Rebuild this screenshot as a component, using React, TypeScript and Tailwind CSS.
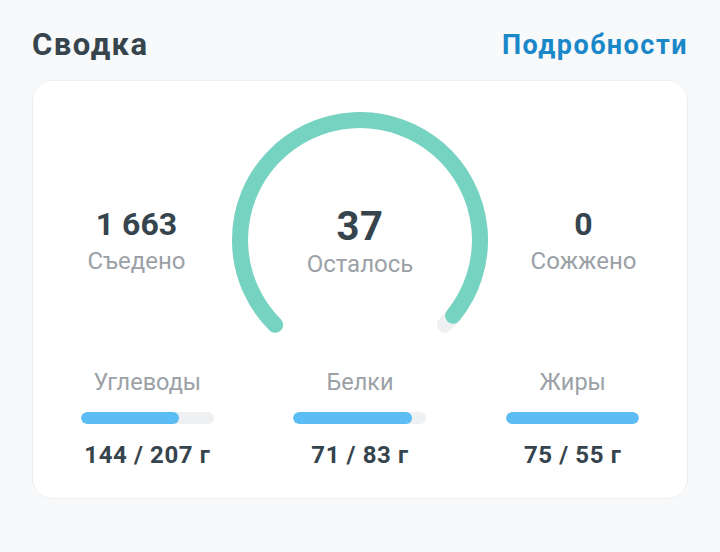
const eaten = 1663
const burned = 0
const remaining = 37
const goal = eaten - burned + remaining

const macros = [
    { name: 'Углеводы', value: 144, goal: 207, fill: 74 },
    { name: 'Белки', value: 71, goal: 83, fill: 89 },
    { name: 'Жиры', value: 75, goal: 55, fill: 100 },
]

function point(deg: number, r: number, c: number) {
    const a = (deg * Math.PI) / 180
    return [c + r * Math.cos(a), c + r * Math.sin(a)]
}

function arc(from: number, to: number, r: number, c: number) {
    const [x1, y1] = point(from, r, c)
    const [x2, y2] = point(to, r, c)
    const large = to - from > 180 ? 1 : 0
    return `M ${x1} ${y1} A ${r} ${r} 0 ${large} 1 ${x2} ${y2}`
}

function Gauge() {
    const progress = Math.min(1, (eaten - burned) / goal)
    const end = 135 + 270 * progress
    return (
        <div className="relative w-[256px] h-[224px]">
            <svg width="256" height="224" viewBox="0 0 256 224">
                <path d={arc(135, 405, 120, 128)} fill="none" stroke="#eef0f2" strokeWidth="16" strokeLinecap="round" />
                <path d={arc(135, end, 120, 128)} fill="none" stroke="#76d3c1" strokeWidth="16" strokeLinecap="round" />
            </svg>
            <div className="absolute inset-x-0 top-[95px] flex flex-col items-center">
                <span className="text-[40px] leading-[40px] font-bold tracking-[0.5px] text-[#36444d]">{remaining}</span>
                <span className="text-[24px] leading-[28px] text-[#9ba1a6] mt-[3px]">Осталось</span>
            </div>
        </div>
    )
}

function Stat({ value, label }: { value: string; label: string }) {
    return (
        <div className="flex flex-col items-center pt-[95px]">
            <span className="text-[32px] leading-[34px] font-bold text-[#36444d]">{value}</span>
            <span className="text-[24px] leading-[28px] text-[#9ba1a6] mt-[6px]">{label}</span>
        </div>
    )
}

export default function App() {
    return (
        <div className="w-[720px] h-[552px] bg-[#f7f9fa] font-['Roboto',sans-serif]">
            <div className="flex items-center justify-between px-[32px] pt-[27px] mb-[17px]">
                <h2 className="text-[31px] leading-[36px] font-bold tracking-[1.5px] text-[#36444d]">Сводка</h2>
                <span className="text-[27px] leading-[36px] font-bold tracking-[1.5px] text-[#1a87c8]">Подробности</span>
            </div>

            <div className="mx-[32px] rounded-[20px] border border-[#eceef0] bg-white px-2 pt-[31px] pb-[29px]">
                <div className="grid grid-cols-[1fr_256px_1fr]">
                    <Stat value="1 663" label="Съедено" />
                    <Gauge />
                    <Stat value={String(burned)} label="Сожжено" />
                </div>

                <div className="grid grid-cols-3 mt-[32px]">
                    {macros.map((m) => (
                        <div key={m.name} className="flex flex-col items-center">
                            <span className="text-[23.5px] leading-[28px] text-[#9ba1a6]">{m.name}</span>
                            <div className="w-[133px] h-[12px] rounded-full bg-[#eef0f2] mt-[16px] overflow-hidden">
                                <div className="h-full rounded-full bg-[#5bbdf4]" style={{ width: `${m.fill}%` }} />
                            </div>
                            <span className="text-[24px] leading-[28px] font-bold tracking-[0.6px] text-[#36444d] mt-[17px]">
                                {m.value} / {m.goal} г
                            </span>
                        </div>
                    ))}
                </div>
            </div>
        </div>
    )
}
